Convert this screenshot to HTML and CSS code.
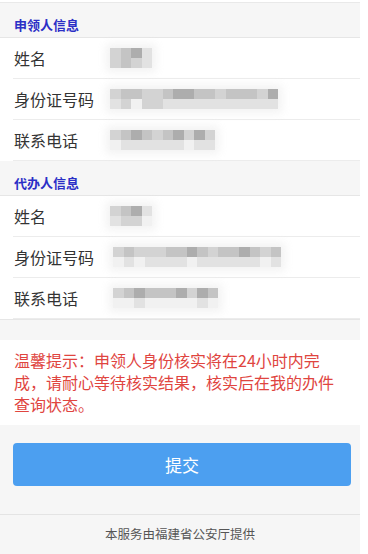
FILE: index.html
```html
<!DOCTYPE html>
<html lang="zh-CN">
<head>
  <meta charset="UTF-8">
  <meta name="viewport" content="width=device-width, initial-scale=1.0">
  <link rel="stylesheet" href="styles.css">
  <title>身份核实</title>
</head>
<body>
  <div class="page">
    <div class="section-title">申领人信息</div>
    <div class="row">
      <span class="label">姓名</span>
      <span class="mosaic cols-4">
        <i class="m2"></i><i class="m3"></i><i class="m4"></i><i class="m1"></i>
        <i class="m2"></i><i class="m3"></i><i class="m2"></i><i class="m1"></i>
      </span>
    </div>
    <div class="row">
      <span class="label">身份证号码</span>
      <span class="mosaic cols-16">
        <i class="m2"></i><i class="m3"></i><i class="m3"></i><i class="m2"></i><i class="m2"></i><i class="m3"></i><i class="m4"></i><i class="m4"></i><i class="m3"></i><i class="m3"></i><i class="m2"></i><i class="m3"></i><i class="m3"></i><i class="m3"></i><i class="m2"></i><i class="m4"></i>
        <i class="m1"></i><i class="m2"></i><i class="m0"></i><i class="m2"></i><i class="m2"></i><i class="m1"></i><i class="m1"></i><i class="m1"></i><i class="m1"></i><i class="m1"></i><i class="m1"></i><i class="m1"></i><i class="m1"></i><i class="m1"></i><i class="m1"></i><i class="m1"></i>
      </span>
    </div>
    <div class="row">
      <span class="label">联系电话</span>
      <span class="mosaic cols-10">
        <i class="m2"></i><i class="m3"></i><i class="m4"></i><i class="m3"></i><i class="m2"></i><i class="m3"></i><i class="m4"></i><i class="m2"></i><i class="m4"></i><i class="m2"></i>
        <i class="m0"></i><i class="m1"></i><i class="m1"></i><i class="m1"></i><i class="m1"></i><i class="m1"></i><i class="m1"></i><i class="m0"></i><i class="m1"></i><i class="m1"></i>
      </span>
    </div>

    <div class="section-title">代办人信息</div>
    <div class="row">
      <span class="label">姓名</span>
      <span class="mosaic cols-4">
        <i class="m2"></i><i class="m3"></i><i class="m4"></i><i class="m1"></i>
        <i class="m1"></i><i class="m2"></i><i class="m2"></i><i class="m0"></i>
      </span>
    </div>
    <div class="row">
      <span class="label">身份证号码</span>
      <span class="mosaic cols-16 shift">
        <i class="m2"></i><i class="m3"></i><i class="m2"></i><i class="m2"></i><i class="m2"></i><i class="m3"></i><i class="m3"></i><i class="m4"></i><i class="m3"></i><i class="m2"></i><i class="m3"></i><i class="m3"></i><i class="m4"></i><i class="m3"></i><i class="m2"></i><i class="m3"></i>
        <i class="m0"></i><i class="m1"></i><i class="m0"></i><i class="m1"></i><i class="m1"></i><i class="m1"></i><i class="m1"></i><i class="m0"></i><i class="m1"></i><i class="m1"></i><i class="m1"></i><i class="m1"></i><i class="m1"></i><i class="m1"></i><i class="m0"></i><i class="m1"></i>
      </span>
    </div>
    <div class="row">
      <span class="label">联系电话</span>
      <span class="mosaic cols-10 shift">
        <i class="m2"></i><i class="m3"></i><i class="m4"></i><i class="m3"></i><i class="m3"></i><i class="m3"></i><i class="m4"></i><i class="m2"></i><i class="m4"></i><i class="m3"></i>
        <i class="m0"></i><i class="m0"></i><i class="m1"></i><i class="m0"></i><i class="m0"></i><i class="m0"></i><i class="m0"></i><i class="m0"></i><i class="m1"></i><i class="m0"></i>
      </span>
    </div>

    <div class="gap"></div>

    <div class="notice">
      <p class="notice-text">温馨提示：申领人身份核实将在24小时内完成，请耐心等待核实结果，核实后在我的办件查询状态。</p>
    </div>

    <div class="bottom">
      <button class="submit-button">提交</button>
      <div class="footer">本服务由福建省公安厅提供</div>
    </div>
  </div>
</body>
</html>
```

FILE: styles.css
```css
body {
  margin: 0;
  background: #fff;
  font-family: "Noto Sans CJK SC", "Noto Sans", sans-serif;
}

.page {
  width: 360px;
  margin-top: 2px;
  border-top: 1px solid #e9e9e9;
}

.section-title {
  height: 35px;
  padding: 10px 0 0 14px;
  line-height: 24px;
  background: #f6f6f6;
  border-bottom: 1px solid #e6e6e6;
  box-sizing: border-box;
  font-size: 13px;
  font-weight: bold;
  color: #2b2fc6;
}

.row {
  height: 41px;
  margin-left: 13px;
  display: flex;
  align-items: center;
  border-bottom: 1px solid #ececec;
  box-sizing: border-box;
}

.label {
  width: 96px;
  padding-left: 1px;
  font-size: 16px;
  color: #333;
}

.mosaic {
  display: grid;
  grid-template-rows: 10px 10px;
  filter: blur(0.6px);
  box-shadow: 0 0 8px 4px rgba(235, 235, 235, 0.6);
}

.mosaic.shift {
  margin-left: 3px;
}

.cols-4 {
  grid-template-columns: repeat(4, 10.5px);
}

.cols-10 {
  grid-template-columns: repeat(10, 10.5px);
}

.cols-16 {
  grid-template-columns: repeat(16, 10.5px);
}

.mosaic i {
  display: block;
}

.m0 { background: #f1f1f1; }
.m1 { background: #e2e2e2; }
.m2 { background: #d3d3d3; }
.m3 { background: #c4c4c4; }
.m4 { background: #adadad; }

.gap {
  height: 21px;
  background: #f6f6f6;
  border-top: 1px solid #e6e6e6;
  box-sizing: border-box;
}

.notice {
  padding: 9px 14px 10px;
  background: #fff;
}

.notice-text {
  margin: 0;
  max-width: 321px;
  font-size: 16px;
  line-height: 22px;
  color: #e0453f;
}

.bottom {
  background: #f6f6f6;
  padding-top: 18px;
}

.submit-button {
  display: block;
  width: 338px;
  height: 43px;
  margin-left: 13px;
  border: none;
  border-radius: 4px;
  background: #4c9ff0;
  color: #fff;
  font-family: "Noto Sans CJK SC", sans-serif;
  font-size: 17px;
  cursor: pointer;
}

.footer {
  margin-top: 28px;
  border-top: 1px solid #e4e4e4;
  height: 40px;
  line-height: 37px;
  text-align: center;
  font-size: 12.5px;
  color: #555;
}
```
